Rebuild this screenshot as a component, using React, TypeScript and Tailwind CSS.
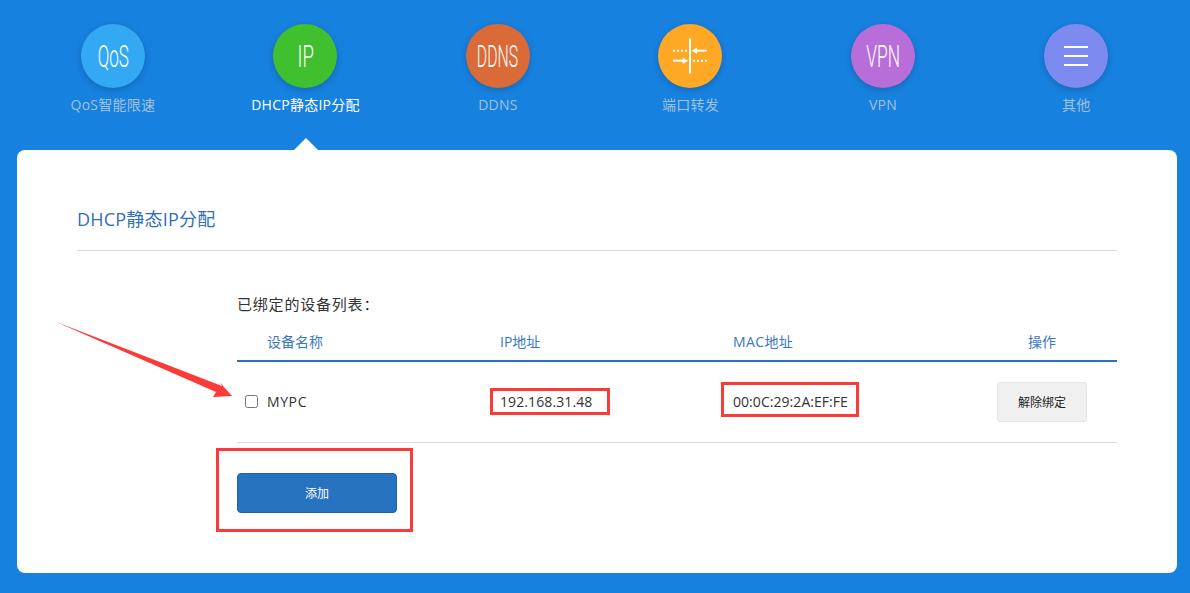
import React from "react";

const sans = "font-['Open_Sans','Noto_Sans_CJK_SC',sans-serif]";

function Text({ t, w }: { t: string; w: string }) {
  return <span className={`block font-['Roboto',sans-serif] font-light text-[31px] leading-none text-white ${w}`}>{t}</span>;
}

function PortIcon() {
  return (
    <svg width="36" height="36" viewBox="0 0 36 36" fill="none" stroke="#fff">
      <path d="M18 0.5V35.5" strokeWidth="2" />
      <path d="M1 12.7H15" strokeWidth="2" strokeDasharray="2 2" />
      <path d="M23 12.7H34.7" strokeWidth="2" />
      <path d="M19.7 12.7L25 9.5V15.9Z" fill="#fff" stroke="none" />
      <path d="M1 22.7H12" strokeWidth="2" />
      <path d="M16 22.7L10.7 19.5V25.9Z" fill="#fff" stroke="none" />
      <path d="M21 22.7H35" strokeWidth="2" strokeDasharray="2 2" />
    </svg>
  );
}

function MenuIcon() {
  return (
    <div className="flex flex-col gap-[7px] w-6">
      <div className="h-[2px] bg-white" />
      <div className="h-[2px] bg-white" />
      <div className="h-[2px] bg-white" />
    </div>
  );
}

function NavItem({ icon, label, bg, active, last }: { icon: React.ReactNode; label: string; bg: string; active?: boolean; last?: boolean }) {
  return (
    <div className={`${last ? "w-[194px]" : "w-[192.5px]"} flex flex-col items-center`}>
      <div className={`w-16 h-16 rounded-full flex items-center justify-center shadow-[0_2px_6px_rgba(0,0,0,0.2)] ${bg}`}>{icon}</div>
      <div className={`mt-[7px] text-[14px] leading-5 tracking-[0.25px] whitespace-nowrap ${active ? "text-white" : "text-[#a3c0dd]"}`}>{label}</div>
    </div>
  );
}

export default function App() {
  return (
    <div className={`relative w-[1190px] h-[593px] overflow-hidden bg-[#1781df] ${sans}`}>
      <div className="flex pl-[16.7px] pt-6 h-[150px]">
        <NavItem bg="bg-[#33a8f3]" label="QoS智能限速" icon={<Text t="QoS" w="scale-x-[0.55]" />} />
        <NavItem bg="bg-[#40bf2f]" label="DHCP静态IP分配" active icon={<Text t="IP" w="scale-x-[0.6]" />} />
        <NavItem bg="bg-[#da6a38]" label="DDNS" icon={<Text t="DDNS" w="scale-x-[0.51]" />} />
        <NavItem bg="bg-[#ffa826]" label="端口转发" icon={<PortIcon />} />
        <NavItem bg="bg-[#b86ed8]" label="VPN" icon={<Text t="VPN" w="scale-x-[0.56]" />} />
        <NavItem bg="bg-[#7d8bf0]" label="其他" last icon={<MenuIcon />} />
      </div>

      <div className="relative ml-[17px] w-[1160px] h-[423px] bg-white rounded-lg pt-[56px] px-[60px]">
        <div className="absolute left-[276.5px] -top-3 w-0 h-0 border-x-[12px] border-x-transparent border-b-[12px] border-b-white" />
        <h1 className="text-[18px] leading-[26px] tracking-[0.2px] text-[#2f70b8] pb-[18px] border-b border-[#dcdcdc]">DHCP静态IP分配</h1>
        <div className="ml-40 mt-[43px]">
          <div className="text-[15px] leading-5 tracking-[0.8px] text-[#333]">已绑定的设备列表：</div>
          <div className="flex h-[48px] items-center pt-[8px] border-b-2 border-[#2873bf] text-[14px] text-[#3a78bd]">
            <div className="w-[263px] pl-[30px]">设备名称</div>
            <div className="w-[233px]">IP地址</div>
            <div className="w-[264px] tracking-[0.4px]">MAC地址</div>
            <div className="w-[90px] text-center">操作</div>
          </div>
          <div className="flex h-[81px] items-center border-b border-[#dcdcdc] text-[14px] text-[#333]">
            <div className="w-[263px] flex items-center pb-[2px]">
              <input type="checkbox" className="w-[13px] h-[13px] ml-2 mr-[9px]" />
              <span className="tracking-[0.6px]">MYPC</span>
            </div>
            <div className="w-[233px] pb-[2px] tracking-[0.1px]">192.168.31.48</div>
            <div className="w-[264px] pb-[2px] tracking-[0.05px] whitespace-nowrap">00:0C:29:2A:EF:FE</div>
            <button className="w-[90px] h-10 pt-[2px] rounded-[3px] bg-[#f0f0f0] border border-[#e4e4e4] text-[12px] text-[#222]">解除绑定</button>
          </div>
          <button className="mt-[30px] w-40 h-10 pt-[2px] rounded-[4px] bg-[#2873bf] border border-[#1f62a8] text-[12px] text-white">添加</button>
        </div>
      </div>

      <div className="absolute left-[490px] top-[388px] w-[120px] h-[27px] border-[3px] border-[#fb3a3a]" />
      <div className="absolute left-[721px] top-[382px] w-[138px] h-[35px] border-[3px] border-[#fb3a3a]" />
      <div className="absolute left-[216px] top-[448px] w-[197px] h-[84px] border-[3px] border-[#fb3a3a]" />
      <svg className="absolute left-0 top-0 pointer-events-none" width="1190" height="593">
        <polygon points="55,321.5 222,386 220,382.5 232,396 213,397 216,392" fill="#fb3a3a" />
      </svg>
    </div>
  );
}
